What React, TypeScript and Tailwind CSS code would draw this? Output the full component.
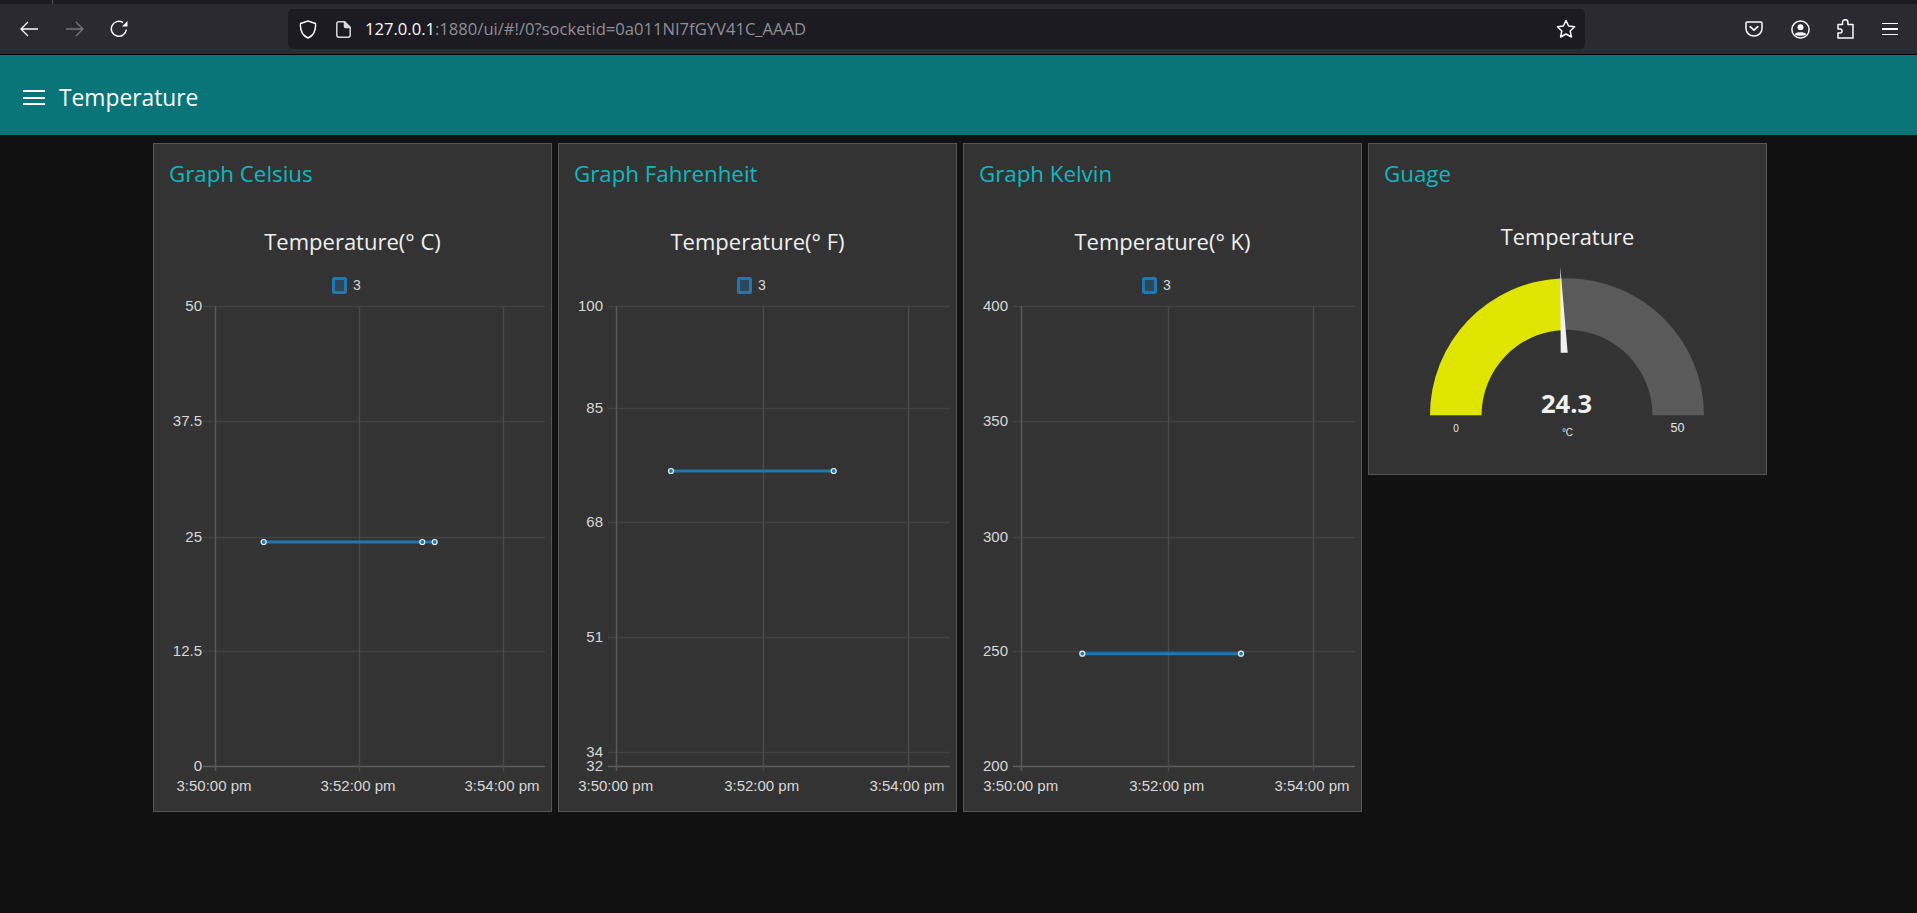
import React from 'react';

const UI_FONT = '"Open Sans", "Noto Sans", sans-serif';
const CHART_FONT = '"Liberation Sans", Arial, sans-serif';

interface ChartProps {
  title: string;
  ticks: { label: string; y: number }[];
  plotX: [number, number, number];
  labelRight: number;
  tickStart: number;
  timeX: [number, number, number];
  lineY: number;
  points: number[];
}

const CARD_VIEW = '1 61 397 607';
const TIMES = ['3:50:00 pm', '3:52:00 pm', '3:54:00 pm'];

const LineChart: React.FC<ChartProps> = ({ title, ticks, plotX, labelRight, tickStart, timeX, lineY, points }) => (
  <svg viewBox={CARD_VIEW} className="block w-[397px] h-[607px]">
    <text x={199.5} y={106.5} textAnchor="middle" fontSize={22} fill="#f0f0f0" style={{ fontFamily: UI_FONT }}>{title}</text>

    <rect x={180.5} y={135.5} width={12} height={14} rx={1} fill="rgba(31,119,180,0.3)" stroke="#1f77b4" strokeWidth={3} />
    <text x={200} y={147} fontSize={14} fill="#d8d8d8" style={{ fontFamily: CHART_FONT }}>3</text>

    {ticks.map((t, i) => (
      <g key={t.label}>
        <line x1={tickStart} x2={392} y1={t.y} y2={t.y} strokeWidth={1.5} stroke={i === ticks.length - 1 ? '#5e5e5e' : '#424242'} />
        <text x={labelRight} y={t.y + 4.5} textAnchor="end" fontSize={15} fill="#d8d8d8" style={{ fontFamily: CHART_FONT }}>{t.label}</text>
      </g>
    ))}
    {plotX.map((x, i) => (
      <line key={x} x1={x} x2={x} y1={163} y2={628} strokeWidth={1.5} stroke={i === 0 ? '#585858' : '#4a4a4a'} />
    ))}
    {TIMES.map((t, i) => (
      <text key={t} x={timeX[i]} y={648} textAnchor="middle" fontSize={15} fill="#d8d8d8" style={{ fontFamily: CHART_FONT }}>{t}</text>
    ))}

    <line x1={points[0]} x2={points[points.length - 1]} y1={lineY} y2={lineY} stroke="#1f77b4" strokeWidth={3} />
    {points.map((x) => (
      <circle key={x} cx={x} cy={lineY} r={2.5} fill="#1f77b4" stroke="#e8f2f8" strokeWidth={1.2} />
    ))}
  </svg>
);

const Card: React.FC<{ heading: string; className: string; children: React.ReactNode }> = ({ heading, className, children }) => (
  <section className={`w-[399px] shrink-0 border border-[#555555] bg-[#333333] ${className}`}>
    <h2 className="h-[60px] flex items-center pl-[15px] text-[22.3px] text-[#0eb8c0]" style={{ fontFamily: UI_FONT }}>{heading}</h2>
    {children}
  </section>
);

const Gauge: React.FC = () => (
  <svg viewBox="1 61 397 270" className="block w-[397px] h-[270px]">
    <text x={199.5} y={102} textAnchor="middle" fontSize={21.8} fill="#f0f0f0" style={{ fontFamily: UI_FONT }}>Temperature</text>
    <path d="M62 272.3A137 137 0 0 1 336 272.3L284.5 272.3A85.5 85.5 0 0 0 113.5 272.3Z" fill="#5a5a5a" />
    <path d="M62 272.3A137 137 0 0 1 193 135.4L195.24 186.9A85.5 85.5 0 0 0 113.5 272.3Z" fill="#e0e500" />
    <polygon points="192.3,123.7 192.7,209.7 199.7,209.7" fill="#f0f0f0" />
    <text x={198.5} y={270.3} textAnchor="middle" fontSize={25.5} fontWeight={700} fill="#f0f0f0" style={{ fontFamily: UI_FONT }}>24.3</text>
    <text x={199.5} y={292.7} textAnchor="middle" fontSize={10} fill="#e6e6e6" style={{ fontFamily: CHART_FONT }}>°C</text>
    <text x={88} y={289} textAnchor="middle" fontSize={10} fill="#e6e6e6" style={{ fontFamily: CHART_FONT }}>0</text>
    <text x={309.5} y={289} textAnchor="middle" fontSize={12.5} fill="#e6e6e6" style={{ fontFamily: CHART_FONT }}>50</text>
  </svg>
);

const BrowserBar: React.FC = () => (
  <div className="shrink-0">
    <div className="h-[4px] bg-[#1c1b22] flex">
      <div className="ml-[52px] w-px bg-[#55545c]" />
    </div>
    <div className="h-[51px] bg-[#2b2a33] border-b border-black flex items-center text-[#fbfbfe]">
      <svg viewBox="0 0 18 16" className="ml-[20px] w-[18px] h-[16px]" fill="none" stroke="currentColor" strokeWidth={1.3}>
        <path d="M1 8h17M8 1 1 8l7 7" />
      </svg>
      <svg viewBox="0 0 18 16" className="ml-[28px] w-[18px] h-[16px] text-[#77767e]" fill="none" stroke="currentColor" strokeWidth={1.3}>
        <path d="M0 8h17M10 1l7 7-7 7" />
      </svg>
      <svg viewBox="0 0 18 18" className="ml-[26px] w-[18px] h-[18px]" fill="none" stroke="currentColor" strokeWidth={1.5}>
        <path d="M16.3 9.5A7.5 7.5 0 1 1 13 2.6" />
        <path d="M17.5 1v5.5H12z" fill="currentColor" stroke="none" />
      </svg>

      <div className="ml-[160px] w-[1297px] h-[40px] rounded-[5px] bg-[#1c1b22] flex items-center">
        <svg viewBox="0 0 18 19" className="ml-[11px] w-[18px] h-[19px]" fill="none" stroke="currentColor" strokeWidth={1.4} strokeLinejoin="round">
          <path d="M9 1 16.5 3.5C17 10 14.5 15.5 9 18 3.5 15.5 1 10 1.5 3.5Z" />
        </svg>
        <svg viewBox="0 0 15 17" className="ml-[19px] w-[15px] h-[17px] text-[#d8d8dc]" fill="none" stroke="currentColor" strokeWidth={1.5}>
          <path d="M2.5.8H8.5L14.2 6.5V14a2.2 2.2 0 0 1-2.2 2.2H3A2.2 2.2 0 0 1 .8 14V2.5A1.7 1.7 0 0 1 2.5.8Z" />
          <path d="M8.5.8 14.2 6.5H9.5a1 1 0 0 1-1-1Z" fill="currentColor" />
        </svg>
        <div className="ml-[14px] text-[16.6px] whitespace-nowrap" style={{ fontFamily: UI_FONT }}>
          <span>127.0.0.1</span>
          <span className="text-[#8f8f97]">:1880/ui/#!/0?socketid=0a011NI7fGYV41C_AAAD</span>
        </div>
        <svg viewBox="0 0 20 20" className="ml-auto mr-[9px] w-[20px] h-[20px]" fill="none" stroke="currentColor" strokeWidth={1.5} strokeLinejoin="round">
          <path d="M10 1.5 12.6 7 18.6 7.8 14.2 12 15.4 18 10 15 4.6 18 5.8 12 1.4 7.8 7.4 7Z" />
        </svg>
      </div>

      <svg viewBox="0 0 18 16" className="ml-[160px] w-[18px] h-[16px]" fill="none" stroke="currentColor" strokeWidth={1.5} strokeLinejoin="round">
        <path d="M2.2.9H15.8A1.2 1.2 0 0 1 17 2.1V7.5A8 7.6 0 0 1 1 7.5V2.1A1.2 1.2 0 0 1 2.2.9Z" />
        <path d="M5.2 5.6 9 9.2 12.8 5.6" strokeLinecap="round" strokeWidth={1.7} />
      </svg>
      <svg viewBox="0 0 19 19" className="ml-[28px] w-[19px] h-[19px]" fill="none" stroke="currentColor" strokeWidth={1.5}>
        <circle cx={9.5} cy={9.5} r={8.6} />
        <circle cx={9.5} cy={7.2} r={3} fill="currentColor" stroke="none" />
        <path d="M3.8 14.2C5 11.6 14 11.6 15.2 14.2 13 16.4 6 16.4 3.8 14.2Z" fill="currentColor" stroke="none" />
      </svg>
      <svg viewBox="0 0 17 20" className="ml-[27px] w-[17px] h-[20px]" fill="none" stroke="currentColor" strokeWidth={1.5} strokeLinejoin="round">
        <path d="M1 5.5H5.5V3.2A2.7 2.5 0 0 1 10.9 3.2V5.5H16V19H1V14H3A2 2 0 0 0 3 10H1Z" />
      </svg>
      <div className="ml-[28px] w-[16px] flex flex-col gap-[4px]">
        <div className="h-[1.5px] bg-[#fbfbfe]" />
        <div className="h-[1.5px] bg-[#fbfbfe]" />
        <div className="h-[1.5px] bg-[#fbfbfe]" />
      </div>
    </div>
  </div>
);

const celsiusTicks = [
  { label: '50', y: 163.5 },
  { label: '37.5', y: 278.5 },
  { label: '25', y: 394.5 },
  { label: '12.5', y: 508.5 },
  { label: '0', y: 623.5 },
];

const fahrenheitTicks = [
  { label: '100', y: 163.5 },
  { label: '85', y: 265.5 },
  { label: '68', y: 379.5 },
  { label: '51', y: 494.5 },
  { label: '34', y: 609.5 },
  { label: '32', y: 623.5 },
];

const kelvinTicks = [
  { label: '400', y: 163.5 },
  { label: '350', y: 278.5 },
  { label: '300', y: 394.5 },
  { label: '250', y: 508.5 },
  { label: '200', y: 623.5 },
];

const App: React.FC = () => (
  <div className="h-screen overflow-hidden flex flex-col bg-[#111111]">
    <BrowserBar />
    <header className="h-[80px] shrink-0 bg-[#0a7579] flex items-center pl-[23px] pt-[5px] text-white">
      <div className="w-[22px] flex flex-col gap-[4.5px]">
        <div className="h-[2px] bg-white" />
        <div className="h-[2px] bg-white" />
        <div className="h-[2px] bg-white" />
      </div>
      <h1 className="ml-[14px] pt-[1px] text-[22.8px]" style={{ fontFamily: UI_FONT }}>Temperature</h1>
    </header>
    <main className="flex items-start gap-[6px] pl-[153px] pt-[8px]">
      <Card heading="Graph Celsius" className="h-[669px]">
        <LineChart
          title="Temperature(° C)"
          ticks={celsiusTicks}
          plotX={[62.5, 206.5, 350.5]}
          labelRight={49}
          tickStart={50}
          timeX={[61, 205, 349]}
          lineY={399}
          points={[110.7, 269.3, 281.7]}
        />
      </Card>
      <Card heading="Graph Fahrenheit" className="h-[669px]">
        <LineChart
          title="Temperature(° F)"
          ticks={fahrenheitTicks}
          plotX={[58.5, 205.5, 350.5]}
          labelRight={45}
          tickStart={50}
          timeX={[57.7, 203.7, 349]}
          lineY={328}
          points={[113, 275.7]}
        />
      </Card>
      <Card heading="Graph Kelvin" className="h-[669px]">
        <LineChart
          title="Temperature(° K)"
          ticks={kelvinTicks}
          plotX={[58.5, 205.5, 350.5]}
          labelRight={45}
          tickStart={50}
          timeX={[57.7, 203.7, 349]}
          lineY={510.7}
          points={[119.3, 278]}
        />
      </Card>
      <Card heading="Guage" className="h-[332px]">
        <Gauge />
      </Card>
    </main>
  </div>
);

export default App;
